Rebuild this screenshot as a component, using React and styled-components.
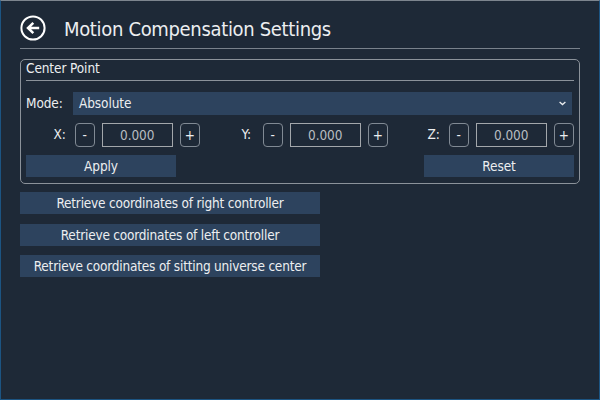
import React from "react";
import styled, { createGlobalStyle } from "styled-components";

const GlobalStyle = createGlobalStyle`
  * { box-sizing: border-box; }
  body { margin: 0; background: #1e2937; }
  button, input { font: inherit; letter-spacing: inherit; margin: 0; padding: 0; }
`;

const Window = styled.main`
  width: 600px;
  height: 400px;
  padding: 0 19px;
  overflow: hidden;
  background: #1e2937;
  border: 1px solid #1c5482;
  border-top-color: #7d858e;
  color: #eceef0;
  font-family: "DejaVu Sans Condensed", "Noto Sans", sans-serif;
  font-size: 13.5px;
  letter-spacing: -0.1px;
  line-height: 22px;
`;

const Header = styled.header`
  display: flex;
  align-items: center;
  gap: 18px;
  height: 48px;
  padding-top: 7px;
  border-bottom: 1px solid #79818b;
`;

const BackButton = styled.button`
  display: flex;
  width: 26px;
  height: 26px;
  border: 0;
  background: none;
  color: #fff;
`;

const Title = styled.h1`
  margin: 2px 0 0;
  font-size: 20px;
  font-weight: 400;
  line-height: 26px;
  letter-spacing: -0.33px;
  white-space: nowrap;
`;

const Group = styled.section`
  height: 125px;
  margin-top: 10px;
  padding: 0 5px;
  border: 1px solid #8b929a;
  border-radius: 5px;
`;

const GroupTitle = styled.h2`
  height: 21px;
  margin: 0;
  border-bottom: 1px solid #8b929a;
  font-size: inherit;
  font-weight: 400;
  line-height: 17px;
`;

const ModeRow = styled.div`
  display: grid;
  grid-template-columns: 47px 499px;
  height: 23px;
  margin-top: 11px;
  line-height: 23px;
`;

const Select = styled.div`
  display: flex;
  align-items: center;
  justify-content: space-between;
  padding: 0 6px;
  background: #2d435e;
`;

const AxisRow = styled.div`
  display: grid;
  grid-template-columns: 188px 186px 147px;
  height: 23px;
  margin-top: 8px;
  padding-left: 27.5px;
`;

const Axis = styled.div`
  display: flex;
  align-items: stretch;
`;

const AxisLabel = styled.span`
  width: 21px;
  line-height: 23px;
`;

const StepButton = styled.button`
  width: 20.5px;
  border: 1px solid #818a94;
  border-radius: 4px;
  background: none;
  color: inherit;
  line-height: 20px;
`;

const Value = styled.input`
  width: 70.5px;
  margin: 0 7px;
  border: 1px solid #a3a7ab;
  border-radius: 0;
  background: none;
  color: #b9bdc1;
  text-align: center;
  outline: none;
`;

const ActionRow = styled.div`
  display: flex;
  justify-content: space-between;
  margin-top: 9px;
`;

const Action = styled.button`
  display: block;
  width: ${(p) => p.$width}px;
  height: 22px;
  border: 0;
  background: #2d435e;
  color: inherit;
  line-height: 22px;
  white-space: nowrap;
`;

const RetrieveList = styled.div`
  display: grid;
  gap: 9.5px;
  margin-top: 8px;
  letter-spacing: -0.2px;
`;

const axes = ["X", "Y", "Z"];
const sources = [
  "Retrieve coordinates of right controller",
  "Retrieve coordinates of left controller",
  "Retrieve coordinates of sitting universe center",
];

export default function App() {
  return (
    <>
      <GlobalStyle />
      <Window>
        <Header>
          <BackButton aria-label="Back">
            <svg width="26" height="26" viewBox="0 0 26 26" fill="none" stroke="currentColor">
              <circle cx="13" cy="13" r="11.6" strokeWidth="2" />
              <path d="M19.2 13H8.5M13.3 7.8L8 13l5.3 5.2" strokeWidth="2.5" />
            </svg>
          </BackButton>
          <Title>Motion Compensation Settings</Title>
        </Header>
        <Group>
          <GroupTitle>Center Point</GroupTitle>
          <ModeRow>
            <span>Mode:</span>
            <Select>
              <span>Absolute</span>
              <svg width="7" height="5" viewBox="0 0 7 5" fill="none" stroke="#eceef0" strokeWidth="1.3">
                <path d="M0.6 1L3.5 3.6 6.4 1" />
              </svg>
            </Select>
          </ModeRow>
          <AxisRow>
            {axes.map((axis) => (
              <Axis key={axis}>
                <AxisLabel>{axis}:</AxisLabel>
                <StepButton>-</StepButton>
                <Value defaultValue="0.000" aria-label={axis} />
                <StepButton>+</StepButton>
              </Axis>
            ))}
          </AxisRow>
          <ActionRow>
            <Action $width={150}>Apply</Action>
            <Action $width={150}>Reset</Action>
          </ActionRow>
        </Group>
        <RetrieveList>
          {sources.map((source) => (
            <Action key={source} $width={300}>{source}</Action>
          ))}
        </RetrieveList>
      </Window>
    </>
  );
}
